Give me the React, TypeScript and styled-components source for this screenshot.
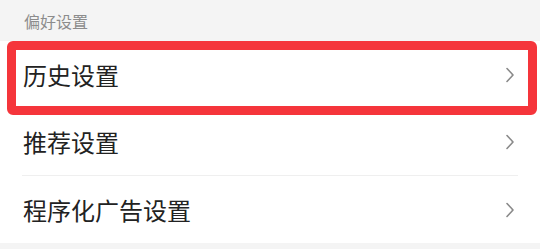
import styled, { createGlobalStyle } from "styled-components";

const GlobalStyle = createGlobalStyle`
  body {
    margin: 0;
    background: #f4f4f4;
    font-family: "Noto Sans CJK SC", "Noto Sans", sans-serif;
  }
`;

const Page = styled.div`
  width: 540px;
  height: 249px;
  background: #f4f4f4;
`;

const SectionTitle = styled.div`
  height: 41px;
  padding-left: 24px;
  display: flex;
  align-items: center;
  font-size: 16px;
  color: #8c8c8c;
`;

const List = styled.div`
  background: #fff;
  display: flex;
  flex-direction: column;
`;

const Row = styled.div<{ $divider?: boolean }>`
  position: relative;
  height: 67px;
  margin-left: 22px;
  margin-right: 22px;
  display: flex;
  align-items: center;
  justify-content: space-between;
  border-bottom: ${(p) => (p.$divider ? "1px solid #efefef" : "none")};
`;

const Label = styled.span`
  font-size: 24px;
  color: #222;
  padding-left: 1px;
`;

const Arrow = styled.span`
  display: flex;
  margin-right: 3px;
`;

const Highlight = styled.div`
  position: absolute;
  left: -15px;
  right: -19px;
  top: 0;
  bottom: -7px;
  border: 9px solid #f5353b;
  border-radius: 6px;
  pointer-events: none;
`;

const Chevron = () => (
  <Arrow>
    <svg width="10" height="16" viewBox="0 0 10 16" fill="none">
      <path
        d="M2 1.5L8 8L2 14.5"
        stroke="#8a8a8a"
        strokeWidth="1.6"
        strokeLinecap="round"
        strokeLinejoin="round"
      />
    </svg>
  </Arrow>
);

const items = [
  { label: "历史设置", active: true, divider: false },
  { label: "推荐设置", divider: true },
  { label: "程序化广告设置", divider: false },
];

const App = () => {
  return (
    <Page>
      <GlobalStyle />
      <SectionTitle>偏好设置</SectionTitle>
      <List>
        {items.map((item) => (
          <Row key={item.label} $divider={item.divider}>
            <Label>{item.label}</Label>
            <Chevron />
            {item.active && <Highlight />}
          </Row>
        ))}
      </List>
    </Page>
  );
};

export default App;
